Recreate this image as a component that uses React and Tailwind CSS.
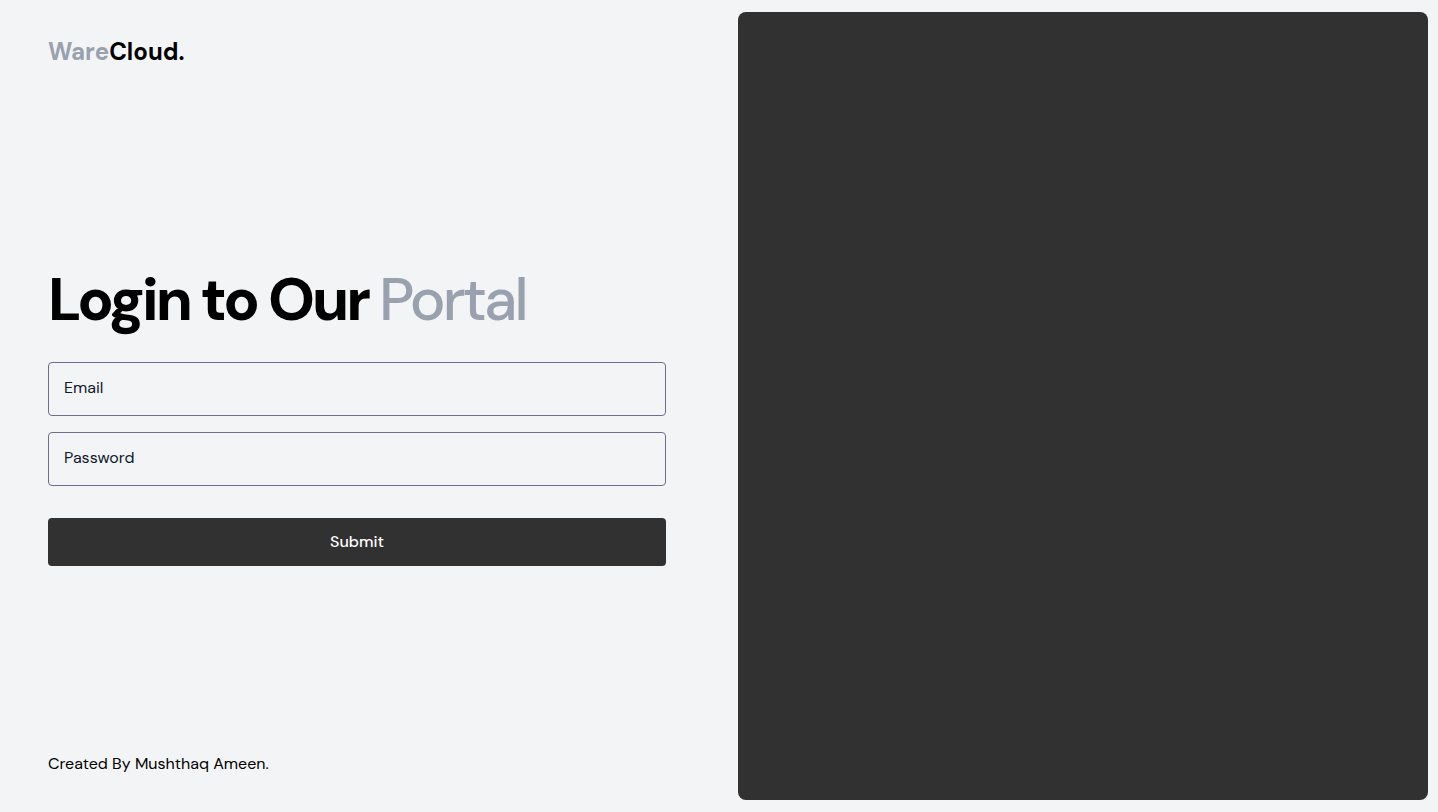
export default function App() {
  return (
    <main className="grid min-h-screen grid-cols-2 bg-gray-100 font-['DM_Sans','Inter',sans-serif] text-base text-black">
      <section className="flex flex-col justify-between py-9 pr-[53px] pl-12">
        <p className="text-2xl font-bold">
          <span className="text-gray-400">Ware</span>Cloud.
        </p>
        <div className="pt-4">
          <h1 className="text-6xl font-extrabold tracking-tighter">
            Login to Our <span className="font-medium text-gray-400">Portal</span>
          </h1>
          <form className="mt-8 flex flex-col gap-4">
            <input
              type="email"
              aria-label="Email"
              placeholder="Email"
              className="h-[54px] w-full rounded border border-[#696f8c] bg-transparent px-[15px] pb-1 placeholder:text-slate-900"
            />
            <input
              type="password"
              aria-label="Password"
              placeholder="Password"
              className="h-[54px] w-full rounded border border-[#696f8c] bg-transparent px-[15px] pb-1 placeholder:text-slate-900"
            />
            <button type="submit" className="mt-4 h-12 rounded bg-[#313131] font-medium text-white">
              Submit
            </button>
          </form>
        </div>
        <p>Created By Mushthaq Ameen.</p>
      </section>
      <section className="py-3 pr-[10px] pl-[19px]">
        <div className="h-full rounded-lg bg-[#313131]" />
      </section>
    </main>
  );
}
